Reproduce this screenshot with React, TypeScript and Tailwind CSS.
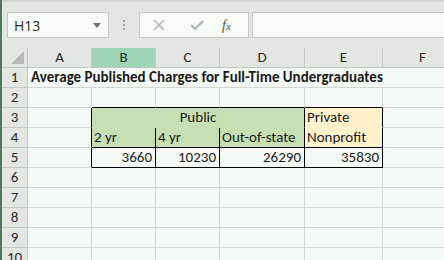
import React from "react";

const FONT = { fontFamily: "Carlito, Calibri, Lato, 'Liberation Sans', sans-serif" };

type Cell = {
  w: string;
  text?: string;
  cls?: string;
  align?: "l" | "r" | "c";
};

function Row({ n, cells }: { n: number; cells: Cell[] }) {
  return (
    <div className="flex h-[20px]">
      <div className="w-[26px] h-[20px] shrink-0 bg-[#e4e6e4] border-r border-b border-[#c3c6c3] flex items-center justify-center text-[15px] text-[#2a2a2a]">
        {n}
      </div>
      {cells.map((c, i) => (
        <div
          key={i}
          className={`${c.w} h-[20px] shrink-0 border-r border-b flex items-end pb-[0px] text-[15px] leading-[19px] whitespace-nowrap text-[#1a1a1a] ${
            c.align === "r" ? "justify-end pr-[3px]" : c.align === "c" ? "justify-center" : "pl-[2px]"
          } ${c.cls ?? "border-[#d4d6d4]"}`}
        >
          {c.text}
        </div>
      ))}
    </div>
  );
}

const W = ["w-[64px]", "w-[64px]", "w-[64px]", "w-[85px]", "w-[78px]", "w-[80px]"];
const LETTERS = ["A", "B", "C", "D", "E", "F"];

function plain(): Cell[] {
  return W.map((w) => ({ w }));
}

export default function App() {
  return (
    <div className="w-[444px] h-[260px] overflow-hidden flex bg-[#f6faf7]" style={FONT}>
      <div className="w-[2px] h-full shrink-0 bg-[#4d7a5c]" />
      <div className="flex-1 min-w-0 flex flex-col">
        {/* Formula bar */}
        <div className="h-[48px] shrink-0 bg-[#e3e6e3] border-t-2 border-t-[#d2d5d2] flex items-start pt-[10px]">
          <div className="ml-[5px] w-[102px] h-[26px] bg-[#f7faf7] border border-[#c4c7c4] flex items-center justify-between pl-[6px] pr-[7px]">
            <span className="text-[14px] text-[#2a2a2a]" style={{ fontFamily: "'Segoe UI', 'Open Sans', 'Liberation Sans', sans-serif" }}>H13</span>
            <svg width="8" height="5" viewBox="0 0 8 5">
              <polygon points="0,0 8,0 4,5" fill="#6f6f6f" />
            </svg>
          </div>
          <div className="w-[30px] h-[26px] flex flex-col items-center justify-center gap-[2px]">
            <div className="w-[2px] h-[2px] bg-[#a2a5a2]" />
            <div className="w-[2px] h-[2px] bg-[#a2a5a2]" />
            <div className="w-[2px] h-[2px] bg-[#a2a5a2]" />
          </div>
          <div className="w-[110px] h-[26px] bg-[#f7faf7] border border-[#c4c7c4] flex items-center">
            <svg width="12" height="12" viewBox="0 0 12 12" className="ml-[13px]">
              <path d="M1 1 L11 11 M11 1 L1 11" stroke="#b0b3b0" strokeWidth="1.5" />
            </svg>
            <svg width="14" height="12" viewBox="0 0 14 12" className="ml-[25px]">
              <path d="M1 6 L5 10 L13 2" stroke="#b0b3b0" strokeWidth="2" fill="none" />
            </svg>
            <span
              className="ml-[18px] text-[14px] italic text-[#555]"
              style={{ fontFamily: "'Liberation Serif', 'DejaVu Serif', serif" }}
            >
              f<span className="text-[11px]">x</span>
            </span>
          </div>
          <div className="ml-[3px] flex-1 h-[26px] bg-[#f7faf7] border border-[#c4c7c4] border-r-0" />
        </div>

        {/* Column headers */}
        <div className="flex h-[20px] shrink-0">
          <div className="w-[26px] h-[20px] shrink-0 bg-[#e3e6e3] border-r border-b border-[#c3c6c3] flex items-end justify-end pr-[3px] pb-[3px]">
            <svg width="13" height="13" viewBox="0 0 13 13">
              <polygon points="13,0 13,13 0,13" fill="#b8bab8" />
            </svg>
          </div>
          {LETTERS.map((l, i) => (
            <div
              key={l}
              className={`${W[i]} h-[20px] shrink-0 border-r border-b border-[#c3c6c3] flex items-center justify-center text-[15px] ${
                l === "B" ? "bg-[#9fd5b7] text-[#1a2a20]" : "bg-[#e3e6e3] text-[#2a2a2a]"
              }`}
            >
              {l}
            </div>
          ))}
        </div>

        {/* Row 1 */}
        <div className="flex h-[20px]">
          <div className="w-[26px] h-[20px] shrink-0 bg-[#e4e6e4] border-r border-b border-[#c3c6c3] flex items-center justify-center text-[15px] text-[#2a2a2a]">
            1
          </div>
          <div className="w-[355px] h-[20px] shrink-0 border-b border-[#d4d6d4] pl-[3px] flex items-end text-[15px] leading-[19px] font-bold whitespace-nowrap text-[#1a1a1a]">
            Average Published Charges for Full-Time Undergraduates
          </div>
          <div className="w-[80px] h-[20px] shrink-0 border-r border-b border-[#d4d6d4]" />
        </div>

        {/* Row 2 */}
        <Row
          n={2}
          cells={[
            { w: W[0] },
            { w: W[1], cls: "border-r-[#d4d6d4] border-b-black" },
            { w: W[2], cls: "border-r-[#d4d6d4] border-b-black" },
            { w: W[3], cls: "border-r-[#d4d6d4] border-b-black" },
            { w: W[4], cls: "border-r-[#d4d6d4] border-b-black" },
            { w: W[5] },
          ]}
        />

        {/* Row 3 */}
        <div className="flex h-[20px]">
          <div className="w-[26px] h-[20px] shrink-0 bg-[#e4e6e4] border-r border-b border-[#c3c6c3] flex items-center justify-center text-[15px] text-[#2a2a2a]">
            3
          </div>
          <div className="w-[64px] h-[20px] shrink-0 border-r border-b border-r-black border-b-[#d4d6d4]" />
          <div className="w-[213px] h-[20px] shrink-0 bg-[#c6e0b4] border-r border-b border-r-black border-b-[#c6e0b4] flex items-end justify-center text-[15px] leading-[19px] text-[#1a1a1a]">
            Public
          </div>
          <div className="w-[78px] h-[20px] shrink-0 bg-[#fff2cc] border-r border-b border-r-black border-b-[#fff2cc] pl-[2px] flex items-end text-[15px] leading-[19px] text-[#1a1a1a]">
            Private
          </div>
          <div className="w-[80px] h-[20px] shrink-0 border-r border-b border-[#d4d6d4]" />
        </div>

        {/* Row 4 */}
        <Row
          n={4}
          cells={[
            { w: W[0], cls: "border-r-black border-b-[#d4d6d4]" },
            { w: W[1], text: "2 yr", cls: "bg-[#c6e0b4] border-black" },
            { w: W[2], text: "4 yr", cls: "bg-[#c6e0b4] border-black" },
            { w: W[3], text: "Out-of-state", cls: "bg-[#c6e0b4] border-black" },
            { w: W[4], text: "Nonprofit", cls: "bg-[#fff2cc] border-black" },
            { w: W[5] },
          ]}
        />

        {/* Row 5 */}
        <Row
          n={5}
          cells={[
            { w: W[0], cls: "border-r-black border-b-[#d4d6d4]" },
            { w: W[1], text: "3660", align: "r", cls: "border-black" },
            { w: W[2], text: "10230", align: "r", cls: "border-black" },
            { w: W[3], text: "26290", align: "r", cls: "border-black" },
            { w: W[4], text: "35830", align: "r", cls: "border-black" },
            { w: W[5] },
          ]}
        />

        {[6, 7, 8, 9, 10].map((n) => (
          <Row key={n} n={n} cells={plain()} />
        ))}
      </div>
    </div>
  );
}
